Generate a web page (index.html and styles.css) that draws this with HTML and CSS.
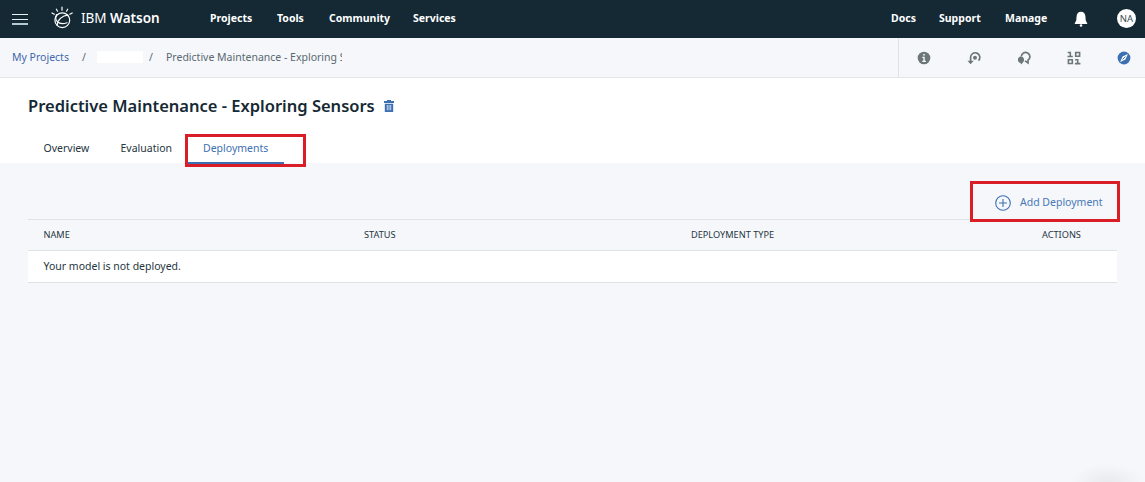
FILE: index.html
```
<!DOCTYPE html>
<html lang="en">
<head>
<meta charset="utf-8">
<title>IBM Watson</title>
<link rel="stylesheet" href="styles.css">
</head>
<body>
<header class="topbar">
  <button class="menu" aria-label="Menu"><span></span><span></span><span></span></button>
  <svg class="logo" viewBox="0 0 24 24" fill="none" stroke="#fff" stroke-width="1.2" stroke-linecap="round">
    <circle cx="12.300" cy="14.200" r="7.400"/>
    <path d="M6.600 8.600C4 13.500 8 20 17 16.800M18 9.200C12.500 9.500 7.500 13.500 7.200 19.200"/>
    <path d="M12 1.200v3M6.400 3.200l1.200 2M17.700 3.200l-1.200 2M2 7l2.300 1.300M22.200 7l-2.300 1.300"/>
  </svg>
  <div class="brand">IBM <b>Watson</b></div>
  <nav class="nav">
    <a>Projects</a><a>Tools</a><a>Community</a><a>Services</a>
  </nav>
  <nav class="nav right">
    <a>Docs</a><a>Support</a><a>Manage</a>
  </nav>
  <svg class="bell" viewBox="0 0 14 16" fill="#fff"><path d="M7 .8c2.700 0 4.200 1.900 4.400 4.500l.3 3.700c.1 1.300.8 2 1.500 2.900v1.100H.8v-1.100c.7-.9 1.400-1.600 1.500-2.900L2.600 5.300C2.800 2.700 4.300.8 7 .8z"/><circle cx="7" cy="14.500" r="1.300"/></svg>
  <div class="avatar">NA</div>
</header>
<div class="subbar">
  <div class="crumbs">
    <a class="c1">My Projects</a><span class="c2">/</span><span class="redacted"></span><span class="c3">/</span><span class="current">Predictive Maintenance - Exploring Sensors</span>
  </div>
  <div class="tools">
    <svg viewBox="0 0 14 14"><circle cx="7" cy="7" r="6.300" fill="#6d7777"/><path d="M5.400 5.800h2.300v4h1.100v1.100H5.300V9.800h1.100V6.900h-1zM6.300 3h1.500v1.500H6.300z" fill="#fff"/></svg>
    <svg viewBox="0 0 14 14" fill="none" stroke="#6d7777" stroke-width="1.700"><path d="M3.600 12V6.500a4.600 4.600 0 1 1 7.900 3.100"/><path d="M.5 9.800h6.200L3.600 13.300z" fill="#6d7777" stroke="none"/><circle cx="8" cy="6.700" r="2" fill="#6d7777" stroke="none"/></svg>
    <svg viewBox="0 0 14 14"><path d="M4.300 5.500A4.300 4.300 0 1 1 11 9.300v2.600L8 9.900" fill="none" stroke="#6d7777" stroke-width="1.700"/><path d="M3.900 5.500a3.300 3.300 0 0 1 2.400 5.500l-2.100 2.500-.7-1.500a3.300 3.300 0 0 1 .4-6.500z" fill="#6d7777"/></svg>
    <svg viewBox="0 0 14 14" fill="none" stroke="#6d7777" stroke-width="1.600"><path d="M.7 1.500h2.600v4.100M.5 5.500h5.300M8.700 1.500h3.900v3.800H8.700zM1.400 8.700h3.900v3.800H1.400zM8.100 8.700h2.600v3.800M7.900 12.600h5.500"/></svg>
    <svg viewBox="0 0 14 14"><circle cx="7" cy="7" r="6.400" fill="#3d70b2"/><path d="M10.900 3.100L8.400 8.400 3.100 10.900 5.600 5.600z" fill="#fff"/><path d="M5.600 8.400l2.800-2.800" stroke="#3d70b2"/></svg>
  </div>
</div>
<section class="head">
  <div class="title"><h1>Predictive Maintenance - Exploring Sensors</h1>
    <svg viewBox="0 0 10 12"><path d="M3 0h4v1h3v2H0V1h3zM.8 3.700h8.400V12H.8z" fill="#3d70b2"/><path d="M3.300 5v5.200M5 5v5.200M6.700 5v5.200" stroke="#fff" stroke-width=".7"/></svg>
  </div>
  <div class="tabs">
    <a>Overview</a><a class="evaluation">Evaluation</a>
    <div class="marked-tab"><a class="active">Deployments</a></div>
  </div>
</section>
<main class="content">
  <div class="action">
    <svg viewBox="0 0 16 16" fill="none" stroke="#3d70b2" stroke-width="1.100"><circle cx="8" cy="8" r="7.300"/><path d="M8 4v8M4 8h8"/></svg>
    <span>Add Deployment</span>
  </div>
  <div class="table">
    <div class="row th"><span>NAME</span><span>STATUS</span><span>DEPLOYMENT TYPE</span><span>ACTIONS</span></div>
    <div class="row empty"><span>Your model is not deployed.</span></div>
  </div>
</main>
<div class="glow"></div>
</body>
</html>
```
FILE: styles.css
```
* { box-sizing: border-box; }
body { margin: 0; width: 1145px; height: 482px; overflow: hidden; position: relative; background: #f5f7fa; color: #263640; font: 10.5px/16px "Noto Sans", sans-serif; white-space: nowrap; }
svg { display: block; flex: none; }
.topbar { height: 38px; background: #152935; color: #fff; display: flex; align-items: center; padding: 0 9px 2px 12px; }
.menu { width: 16px; height: 11px; margin-top: 3px; padding: 0; border: 0; background: none; display: flex; flex-direction: column; justify-content: space-between; }
.menu span { height: 1px; background: #e8f0f4; }
.menu span:last-child { height: 2px; background: #b5c8d0; }
.logo { width: 24px; height: 24px; margin-left: 22px; }
.brand { width: 129px; margin-left: 7px; font-size: 13.5px; font-weight: 400; }
.brand b { font-weight: 600; }
.nav { display: grid; grid-template-columns: 67px 52px 84px 59px; font-weight: 700; font-size: 10.5px; }
.nav.right { margin-left: auto; grid-template-columns: 48px 66px 69px; }
.bell { width: 14px; height: 16px; margin-top: 1px; }
.avatar { width: 19px; height: 19px; margin-left: 29px; border-radius: 50%; background: #fff; color: #394b54; font-size: 9.5px; line-height: 19px; text-align: center; }
.subbar { height: 40px; border-bottom: 1px solid #e3e6e9; display: flex; align-items: stretch; color: #5a6872; }
.crumbs { display: flex; align-items: center; padding: 0 0 2px 12px; width: 898px; }
.crumbs .c1 { width: 70px; color: #4167ae; }
.crumbs .c2 { width: 15px; }
.redacted { width: 46px; height: 12px; background: #fff; margin-right: 6px; }
.crumbs .c3 { width: 17px; }
.current { width: 176px; overflow: hidden; }
.tools { flex: 1; border-left: 1px solid #e0e4e8; display: flex; align-items: center; justify-content: space-between; padding: 0 14px 0 18px; }
.tools svg { width: 14px; height: 14px; }
.head { height: 85px; background: #fff; padding: 17px 28px 0; }
.title { display: flex; align-items: center; gap: 9px; height: 22px; color: #152934; }
.title h1 { margin: 0; width: 347px; font-size: 16.5px; line-height: 22px; font-weight: 600; }
.title svg { width: 10px; height: 12px; }
.tabs { display: flex; margin: 17px 0 0 15.5px; }
.tabs > a { padding-top: 6px; width: 77px; }
.tabs .evaluation { width: 64.5px; }
.marked-tab { width: 121px; height: 33px; border: 3px solid #da1e28; position: relative; z-index: 1; }
.active { display: block; width: 96px; height: 27px; padding: 3px 0 0 15px; border-bottom: 2px solid #3d70b2; color: #3d70b2; }
.content { padding: 18px 28px 0 28px; }
.action { width: 150px; height: 41px; margin: 0 -3px -3px auto; border: 3px solid #da1e28; display: flex; align-items: center; gap: 9px; padding-left: 22px; color: #4a78b7; position: relative; z-index: 1; }
.action svg { width: 16px; height: 16px; margin-top: 3px; }
.row { display: flex; align-items: center; border-bottom: 1px solid #dfe3e6; padding-left: 15.5px; }
.th { height: 32px; border-top: 1px solid #dfe3e6; display: grid; grid-template-columns: 320.5px 327px 351px 1fr; font-size: 9.2px; }
.empty { height: 32px; background: #fff; padding-bottom: 2px; }
.glow { position: absolute; right: 0; bottom: 0; width: 75px; height: 18px; background: radial-gradient(ellipse at 50% 100%, rgba(225,227,229,.65), rgba(245,247,250,0) 70%); }
```
